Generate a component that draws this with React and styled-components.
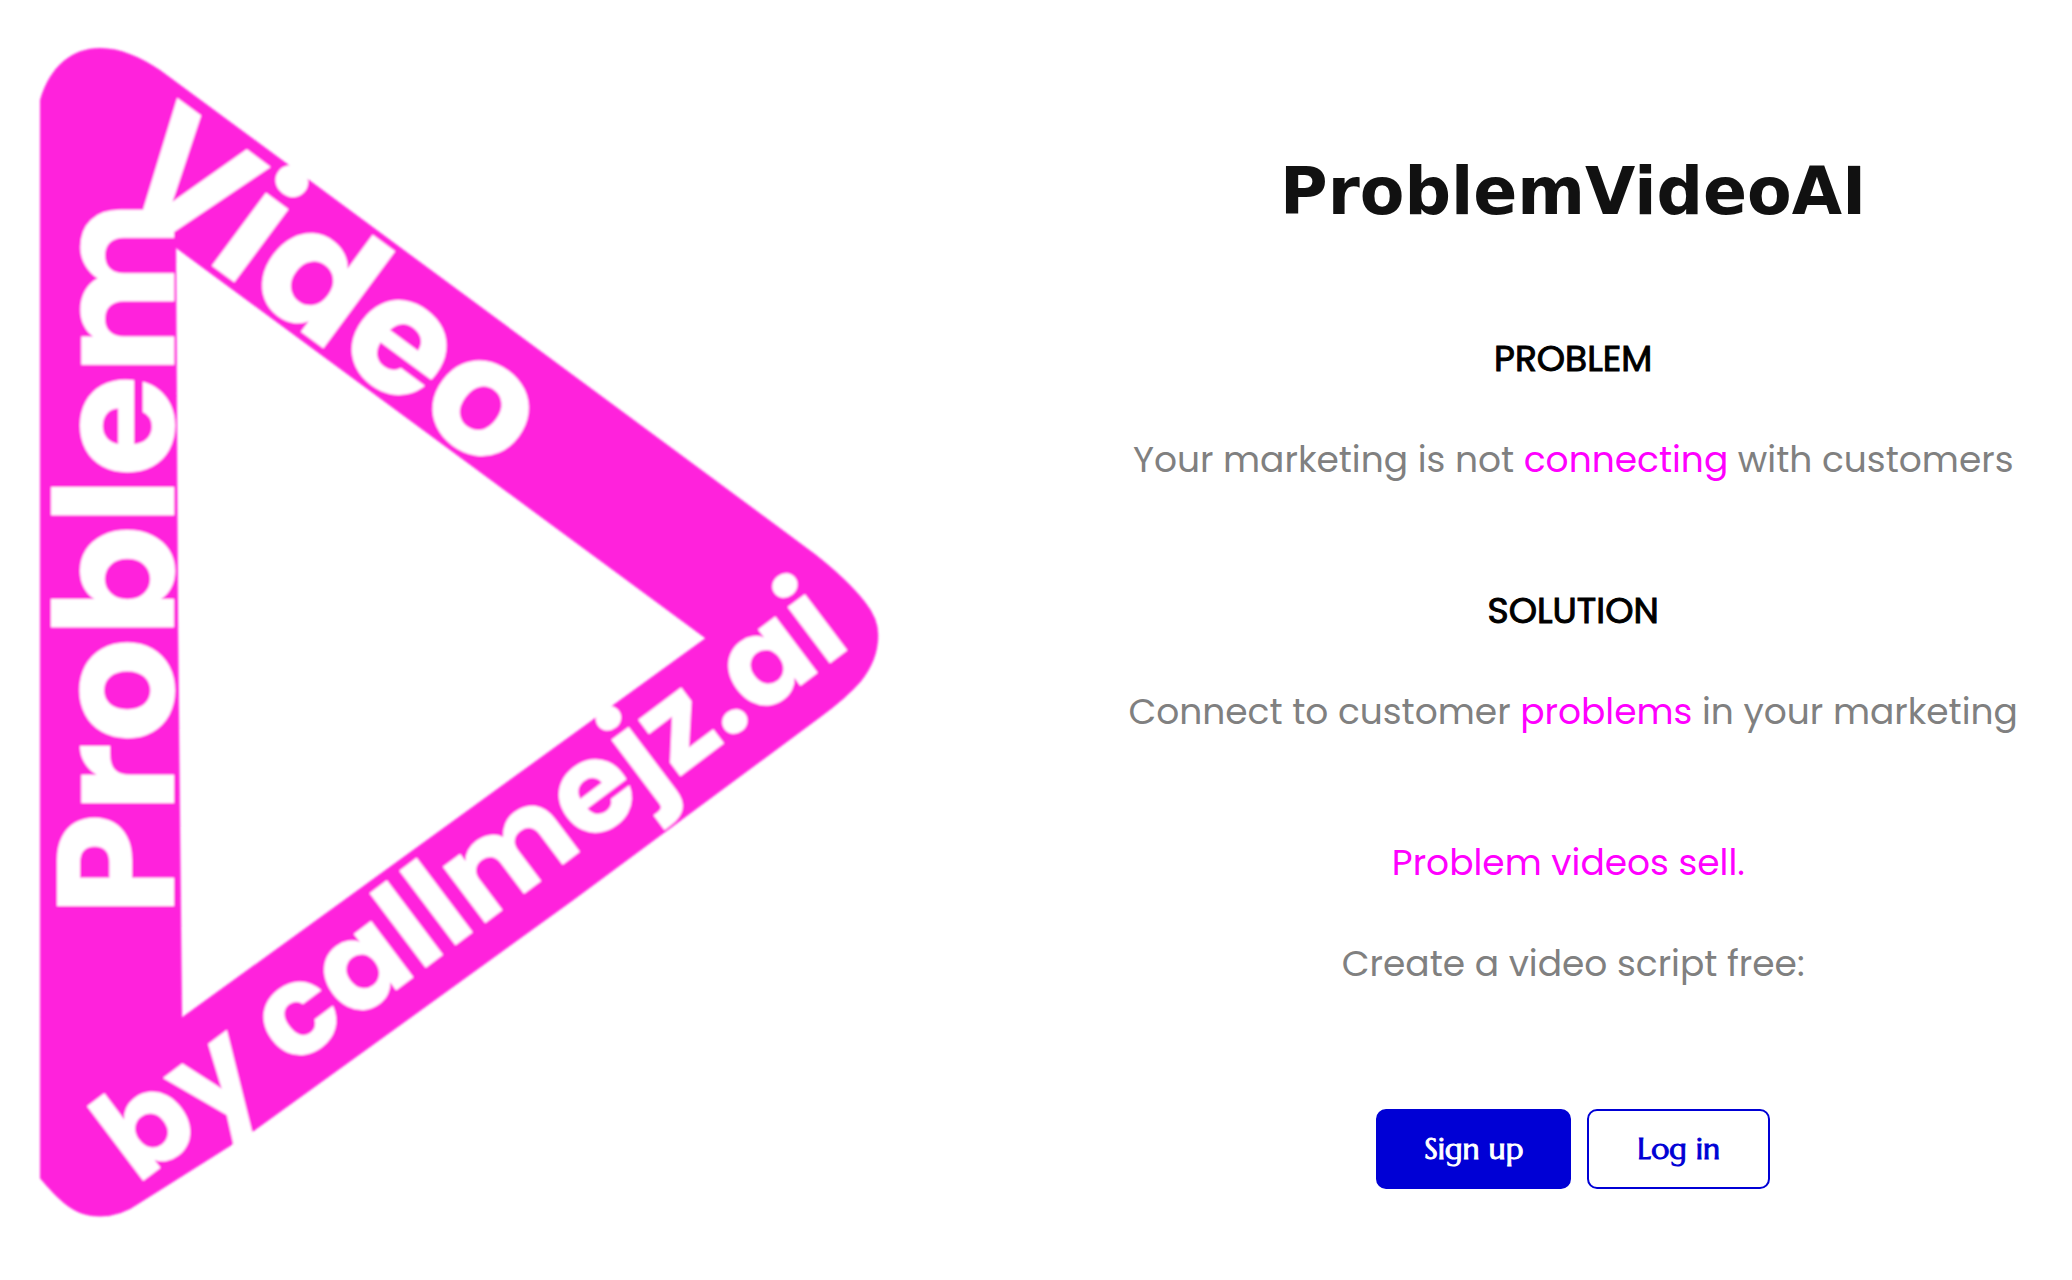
import React from "react";
import styled, { createGlobalStyle } from "styled-components";

const GlobalStyle = createGlobalStyle`
  *, *::before, *::after { box-sizing: border-box; }
  body { margin: 0; background: #ffffff; }
`;

const Page = styled.main`
  display: grid;
  grid-template-columns: minmax(0, 14fr) minmax(0, 13fr);
  align-items: start;
`;

const Logo = styled.svg`
  display: block;
  width: 100%;
  height: auto;
`;

const LogoText = styled.text`
  font-family: Poppins, Inter, sans-serif;
  font-weight: 700;
  font-size: ${({ $size }) => $size}px;
  fill: #ffffff;
`;

const Intro = styled.section`
  display: flex;
  flex-direction: column;
  align-items: center;
  padding: 152px 0 90px;
  text-align: center;
`;

const Title = styled.h1`
  margin: 0 0 102px;
  font-family: Verdana, "DejaVu Sans", sans-serif;
  font-size: 65px;
  font-weight: 700;
  line-height: 80px;
  color: #111111;
`;

const Block = styled.div`
  display: flex;
  flex-direction: column;
  gap: 51px;
  margin-bottom: 101px;
`;

const Label = styled.h2`
  margin: 0;
  font-family: Poppins, Lato, sans-serif;
  font-size: 36px;
  font-weight: 400;
  line-height: 50px;
  color: #000000;
  -webkit-text-stroke: 1px #000000;
`;

const Line = styled.p`
  margin: 0;
  font-family: Poppins, Inter, sans-serif;
  font-size: 36px;
  font-weight: 400;
  line-height: 50px;
  white-space: nowrap;
  color: ${({ $accent }) => ($accent ? "#ff00ff" : "#808080")};
`;

const Accent = styled.span`
  color: #ff00ff;
`;

const Actions = styled.div`
  display: flex;
  gap: 16px;
  margin-top: 19px;
`;

const Button = styled.button`
  height: 80px;
  min-width: 183px;
  padding: 0 46px;
  border: 2px solid #0000d5;
  border-radius: 10px;
  background: ${({ $filled }) => ($filled ? "#0000d5" : "#ffffff")};
  color: ${({ $filled }) => ($filled ? "#ffffff" : "#0000d5")};
  font-family: Marcellus, Lato, sans-serif;
  font-size: 30px;
  font-weight: 400;
  line-height: 40px;
  -webkit-text-stroke: 1px currentColor;
  cursor: pointer;
`;

function BrandLogo() {
  return (
    <Logo viewBox="0 0 1074 1280" role="img" aria-label="Problem Video by callmejz.ai">
      <defs>
        <filter id="soft" x="0" y="0" width="1074" height="1280" filterUnits="userSpaceOnUse">
          <feGaussianBlur stdDeviation="1" />
        </filter>
      </defs>
      <g filter="url(#soft)">
        <path
          fill="#ff23dc"
          fillRule="evenodd"
          d="M40 100 C50 66 72 48 100 48 C121 48 140 57 160 70 L282 160 L607 400 L815 554 Q848 580 865 602 Q878 618 878 635 Q878 660 860 682 Q846 698 820 717 L573 900 L252 1132 L139 1203 Q121 1216 100 1216 C72 1216 58 1198 40 1178 Z M176 248 L178 620 L182 1017 L705 638 Z"
        />
        <LogoText $size={165} transform="translate(174 916) rotate(-90)">Problem</LogoText>
        <LogoText $size={163} transform="translate(108 189) rotate(36.5)">Video</LogoText>
        <LogoText $size={126} transform="translate(137 1185) rotate(-37)">by callmejz.ai</LogoText>
      </g>
    </Logo>
  );
}

export default function App() {
  return (
    <>
      <GlobalStyle />
      <Page>
        <BrandLogo />
        <Intro>
          <Title>ProblemVideoAI</Title>
          <Block>
            <Label>PROBLEM</Label>
            <Line>
              Your marketing is not <Accent>connecting</Accent> with customers
            </Line>
          </Block>
          <Block>
            <Label>SOLUTION</Label>
            <Line>
              Connect to customer <Accent>problems</Accent> in your marketing
            </Line>
          </Block>
          <Block>
            <Line $accent>Problem videos sell.{"\u00a0"}</Line>
            <Line>Create a video script free:</Line>
          </Block>
          <Actions>
            <Button type="button" $filled>Sign up</Button>
            <Button type="button">Log in</Button>
          </Actions>
        </Intro>
      </Page>
    </>
  );
}
